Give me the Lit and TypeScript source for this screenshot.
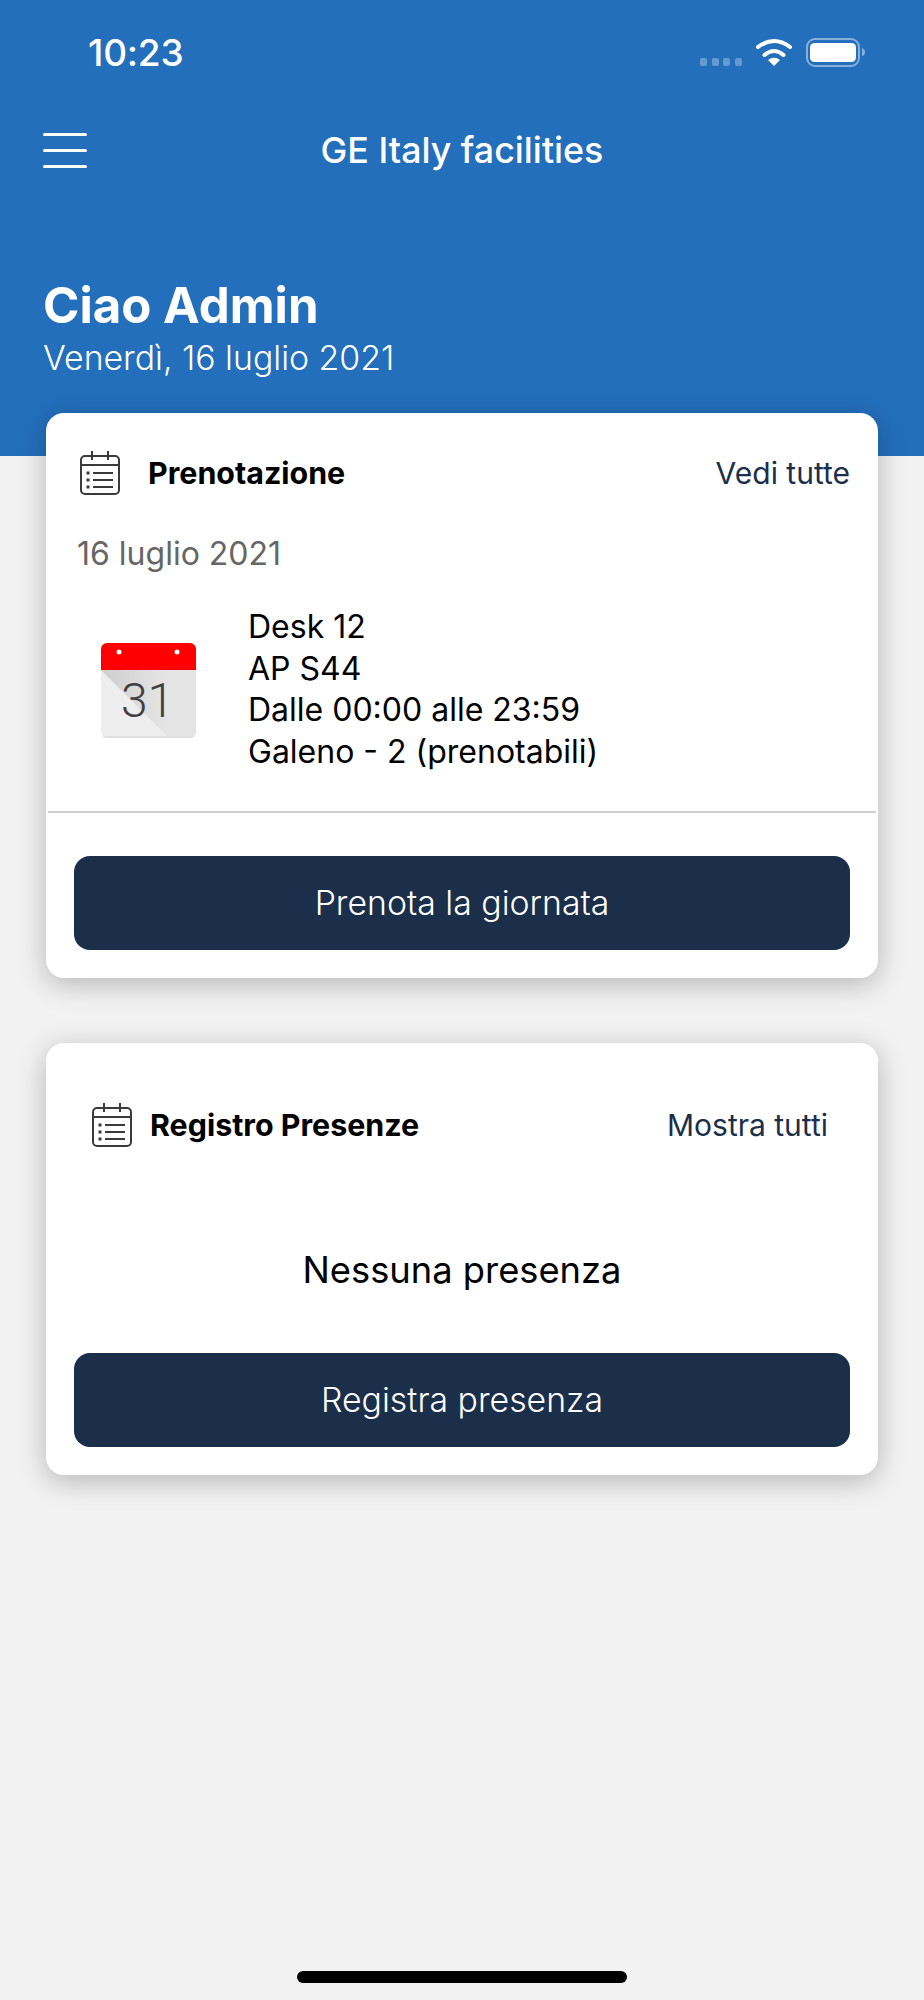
import { LitElement, html, css, svg } from "lit";
import { customElement } from "lit/decorators.js";

const listIcon = svg`<svg class="cal-icon" viewBox="0 0 40 44" width="40" height="44" fill="none" stroke="#3a3a3a" stroke-width="2">
  <rect x="1" y="5" width="38" height="38" rx="4"/>
  <path d="M1 14H39M12 0V9M28 0V9"/>
  <path d="M13 22H33M13 29H33M13 36H33" stroke-width="2"/>
  <path d="M8 20.500V23.500M8 27.500V30.500M8 34.500V37.500" stroke-width="3"/>
</svg>`;

const bigCal = html`<svg class="big-cal" viewBox="0 0 95 95" width="95" height="95">
  <defs>
    <clipPath id="c"><rect width="95" height="95" rx="6"/></clipPath>
    <linearGradient id="fold" gradientUnits="userSpaceOnUse" x1="0" y1="27" x2="62" y2="27">
      <stop offset="0" stop-color="#cecece"/>
      <stop offset="1" stop-color="#e4e4e4"/>
    </linearGradient>
  </defs>
  <g clip-path="url(#c)">
    <rect width="95" height="95" fill="#eeeeee"/>
    <path d="M0 27L68 95H95V27Z" fill="url(#fold)"/>
    <rect y="93" width="95" height="2" fill="#e0e0e0"/>
    <rect width="95" height="27" fill="#ff0000"/>
    <circle cx="18" cy="9" r="2.500" fill="#fff"/>
    <circle cx="76" cy="9" r="2.500" fill="#fff"/>
  </g>
  <text class="num" x="46.500" y="74" text-anchor="middle">31</text>
</svg>`;

@customElement("app-root")
export class AppRoot extends LitElement {
  static styles = css`
    :host {
      display: flex;
      flex-direction: column;
      width: 924px;
      height: 2000px;
      background: #f2f2f2;
      font-family: Inter, "Liberation Sans", sans-serif;
      color: #000;
      overflow: hidden;
    }
    .hero {
      height: 456px;
      box-sizing: border-box;
      background: #236fbc;
      color: #fff;
      flex: none;
      display: flex;
      flex-direction: column;
    }
    .status {
      height: 118px;
      padding: 33px 58px 0 88px;
      box-sizing: border-box;
      display: flex;
      justify-content: space-between;
      align-items: flex-start;
    }
    .time {
      font-size: 37px;
      font-weight: 500;
      line-height: 40px;
      letter-spacing: -0.2px;
    }
    .status svg { display: block; margin-top: 5px; }
    .nav {
      height: 64px;
      padding-left: 43px;
      display: flex;
      align-items: center;
    }
    .menu {
      width: 44px;
      display: flex;
      flex-direction: column;
      gap: 13px;
    }
    .menu span {
      height: 3px;
      border-radius: 2px;
      background: #fff;
    }
    .title {
      flex: 1;
      padding-right: 87px;
      text-align: center;
      font-size: 35.800px;
      font-weight: 500;
      line-height: 44px;
    }
    .greet {
      padding: 93px 43px 0;
    }
    .hello {
      font-size: 49.200px;
      font-weight: 700;
      line-height: 60px;
    }
    .date {
      margin-top: 3px;
      font-size: 33.800px;
      font-weight: 300;
      line-height: 40px;
    }
    main {
      flex: 1;
      margin-top: -43px;
      padding: 0 46px;
      display: flex;
      flex-direction: column;
      gap: 65px;
      position: relative;
    }
    .card {
      background: #fff;
      border-radius: 18px;
      box-shadow: 0 6px 28px rgba(0, 0, 0, 0.25);
      display: flex;
      flex-direction: column;
    }
    .head {
      display: flex;
      align-items: center;
    }
    .a .head { padding: 38px 28px 0 34px; height: 44px; }
    .b .head { padding: 60px 50px 0 46px; height: 44px; }
    .head-title {
      flex: 1;
      font-size: 30.400px;
      font-weight: 700;
      line-height: 36px;
    }
    .a .head-title { margin-left: 28px; }
    .b .head-title { margin-left: 18px; }
    .head-link {
      font-size: 30px;
      color: #1b2f4a;
      line-height: 36px;
    }
    .day {
      margin: 39px 0 0 31px;
      font-size: 32px;
      line-height: 40px;
      color: #666;
      font-weight: 400;
    }
    .book {
      margin-top: 32px;
      padding-left: 55px;
      display: flex;
      align-items: center;
    }
    .big-cal { flex: none; display: block; margin-top: 2px; }
    .num {
      font-family: Roboto, sans-serif;
      font-weight: 300;
      font-size: 48px;
      fill: #404040;
    }
    .lines {
      margin-left: 52px;
      font-size: 32px;
      line-height: 41.700px;
    }
    .rule {
      margin: 38px 2px 0;
      height: 2px;
      background: #cfcfcf;
    }
    .btn {
      height: 94px;
      margin: 0 28px;
      background: #1b2f4a;
      color: #fff;
      border-radius: 16px;
      display: flex;
      align-items: center;
      justify-content: center;
      font-size: 33.800px;
      font-weight: 300;
    }
    .a .btn { margin-top: 43px; margin-bottom: 28px; }
    .b .btn { margin-bottom: 28px; }
    .none {
      text-align: center;
      font-size: 36.300px;
      line-height: 44px;
      margin: 101px 0 61px;
    }
    .home {
      flex: none;
      height: 29px;
      display: flex;
      justify-content: center;
    }
    .home span {
      width: 330px;
      height: 12px;
      border-radius: 6px;
      background: #000;
    }
  `;

  render() {
    return html`
      <header class="hero">
        <div class="status">
          <div class="time">10:23</div>
          <svg width="166" height="30" viewBox="0 0 166 30" fill="none">
            <g fill="#fff" fill-opacity=".3">
              <rect x="0" y="20" width="7" height="8" rx="2"/>
              <rect x="12" y="20" width="7" height="8" rx="2"/>
              <rect x="23" y="20" width="7" height="8" rx="2"/>
              <rect x="35" y="20" width="7" height="8" rx="2"/>
            </g>
            <path d="M58 9Q74 -3 90 9" stroke="#fff" stroke-width="4" stroke-linecap="round"/>
            <path d="M64.500 17Q74 9 83.500 17" stroke="#fff" stroke-width="4" stroke-linecap="round"/>
            <path d="M68 22Q74 17.500 80 22L74 28Z" fill="#fff"/>
            <rect x="107" y="1" width="52" height="27" rx="8" stroke="#fff" stroke-opacity=".45" stroke-width="2"/>
            <rect x="110" y="5" width="46" height="19" rx="4.500" fill="#fff"/>
            <path d="M162 10C164 10.500 165 12.500 165 14S164 17.500 162 18Z" fill="#fff" fill-opacity=".45"/>
          </svg>
        </div>
        <div class="nav">
          <div class="menu"><span></span><span></span><span></span></div>
          <div class="title">GE Italy facilities</div>
        </div>
        <div class="greet">
          <div class="hello">Ciao Admin</div>
          <div class="date">Venerdì, 16 luglio 2021</div>
        </div>
      </header>
      <main>
        <section class="card a">
          <div class="head">
            ${listIcon}
            <div class="head-title">Prenotazione</div>
            <div class="head-link">Vedi tutte</div>
          </div>
          <div class="day">16 luglio 2021</div>
          <div class="book">
            ${bigCal}
            <div class="lines">
              <div>Desk 12</div>
              <div>AP S44</div>
              <div>Dalle 00:00 alle 23:59</div>
              <div>Galeno - 2 (prenotabili)</div>
            </div>
          </div>
          <div class="rule"></div>
          <div class="btn">Prenota la giornata</div>
        </section>
        <section class="card b">
          <div class="head">
            ${listIcon}
            <div class="head-title">Registro Presenze</div>
            <div class="head-link">Mostra tutti</div>
          </div>
          <div class="none">Nessuna presenza</div>
          <div class="btn">Registra presenza</div>
        </section>
      </main>
      <div class="home"><span></span></div>
    `;
  }
}
